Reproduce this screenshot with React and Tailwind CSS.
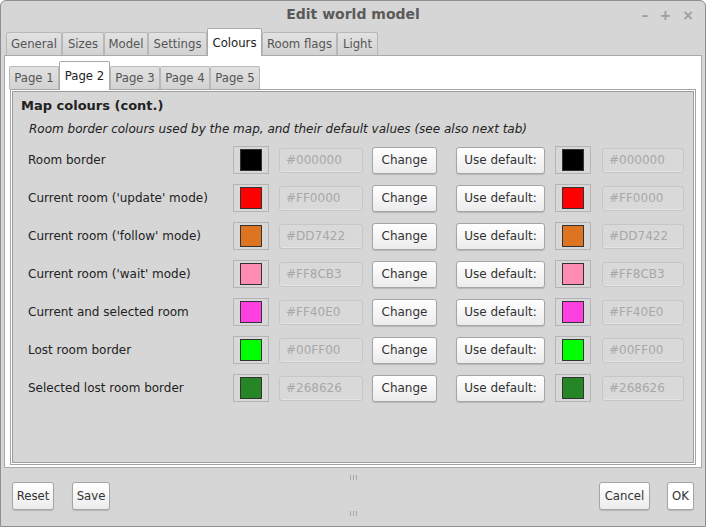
import React from 'react';

const mainTabs = [
  { label: 'General', w: 'w-[56px]' },
  { label: 'Sizes', w: 'w-[42px]' },
  { label: 'Model', w: 'w-[44px]' },
  { label: 'Settings', w: 'w-[59px]' },
  { label: 'Colours', w: 'w-[55px]', active: true },
  { label: 'Room flags', w: 'w-[75px]' },
  { label: 'Light', w: 'w-[41px]' },
];

const pageTabs = [
  { label: 'Page 1', w: 'w-[50px]' },
  { label: 'Page 2', w: 'w-[51px]', active: true },
  { label: 'Page 3', w: 'w-[50px]' },
  { label: 'Page 4', w: 'w-[50px]' },
  { label: 'Page 5', w: 'w-[50px]' },
];

const rows = [
  { label: 'Room border', hex: '#000000', bg: 'bg-[#000000]' },
  { label: "Current room ('update' mode)", hex: '#FF0000', bg: 'bg-[#ff0000]' },
  { label: "Current room ('follow' mode)", hex: '#DD7422', bg: 'bg-[#dd7422]' },
  { label: "Current room ('wait' mode)", hex: '#FF8CB3', bg: 'bg-[#ff8cb3]' },
  { label: 'Current and selected room', hex: '#FF40E0', bg: 'bg-[#ff40e0]' },
  { label: 'Lost room border', hex: '#00FF00', bg: 'bg-[#00ff00]' },
  { label: 'Selected lost room border', hex: '#268626', bg: 'bg-[#268626]' },
];

const Tab = ({ label, w, active, tall }) => (
  <div
    className={`${w} flex items-center justify-center border border-b-0 rounded-t-[2px] ${
      active
        ? `bg-white border-[#a9a9a9] text-[#222] ${tall} relative z-10 -mb-px`
        : 'bg-gradient-to-b from-[#e2e2e2] to-[#d2d2d2] border-[#b8b8b8] text-[#555] h-[23px]'
    }`}
  >
    {label}
  </div>
);

const Swatch = ({ bg }) => (
  <div className="w-[36px] h-[28px] border border-[#b4b4b4] bg-[#d8d8d8] flex items-center justify-center">
    <div className={`w-[22px] h-[22px] border border-[#333] ${bg}`} />
  </div>
);

const HexBox = ({ hex, w }) => (
  <div className={`${w} h-[25px] border border-[#c6c6c6] rounded-[3px] bg-[#d9d9d9] shadow-[inset_0_-1px_0_#e4e4e4] flex items-center pl-[6px] text-[#a8a8a8]`}>
    {hex}
  </div>
);

const Button = ({ children, w, h = 'h-[27px]', extra = '' }) => (
  <div className={`${w} ${h} ${extra} flex items-center justify-center rounded-[3px] border border-[#a5a5a5] bg-gradient-to-b from-white to-[#ececec] shadow-[0_1px_1px_rgba(0,0,0,0.15)] text-[#333]`}>
    {children}
  </div>
);

const Grip = () => (
  <div className="flex justify-center gap-[2px]">
    <div className="w-px h-[5px] bg-[#a8a8a8]" />
    <div className="w-px h-[5px] bg-[#a8a8a8]" />
    <div className="w-px h-[5px] bg-[#a8a8a8]" />
  </div>
);

export default function App() {
  return (
    <div
      className="w-[706px] h-[527px] bg-[#d6d6d6] border border-[#8e8e8e] rounded-t-[6px] flex flex-col overflow-hidden text-[12px]"
      style={{ fontFamily: '"DejaVu Sans", sans-serif' }}
    >
      {/* Title bar */}
      <div className="relative h-[26px] flex items-center justify-center shrink-0">
        <span className="font-bold text-[14px] text-[#5a5a5a]">Edit world model</span>
        <div className="absolute right-[11px] top-[4px] flex gap-[11px] text-[#a0a0a0] text-[14px] font-bold">
          <span>–</span>
          <span>+</span>
          <span>×</span>
        </div>
      </div>

      {/* Main tabs */}
      <div
        className="flex items-end pl-[5px] h-[28px] shrink-0 text-[13px]"
        style={{ fontFamily: '"DejaVu Sans Condensed", "DejaVu Sans", sans-serif' }}
      >
        {mainTabs.map((t) => (
          <Tab key={t.label} {...t} tall="h-[28px]" />
        ))}
      </div>

      {/* Outer pane */}
      <div className="mx-[3px] h-[413px] bg-white border border-[#a9a9a9] flex flex-col shrink-0">
        <div
          className="flex items-end pl-[4px] h-[33px] shrink-0 text-[13px]"
          style={{ fontFamily: '"DejaVu Sans Condensed", "DejaVu Sans", sans-serif' }}
        >
          {pageTabs.map((t) => (
            <Tab key={t.label} {...t} tall="h-[29px]" />
          ))}
        </div>
        <div className="mx-[5px] mb-[2px] flex-1 border border-[#a5a5a5] bg-white p-px flex">
          <div className="flex-1 border border-[#9c9c9c] bg-[#d6d6d6] pt-[3px] pl-[8px]">
            <div className="font-bold text-[13px] text-[#222] h-[22px] flex items-center">Map colours (cont.)</div>
            <div className="italic text-[#222] pl-[8px] h-[24px] flex items-center">
              Room border colours used by the map, and their default values (see also next tab)
            </div>
            <div className="flex flex-col pl-[7px]">
              {rows.map((r) => (
                <div key={r.label} className="flex items-center h-[38px] text-[#222]">
                  <div className="w-[205px]">{r.label}</div>
                  <Swatch bg={r.bg} />
                  <div className="w-[10px]" />
                  <HexBox hex={r.hex} w="w-[84px]" />
                  <div className="w-[9px]" />
                  <Button w="w-[65px]">Change</Button>
                  <div className="w-[19px]" />
                  <Button w="w-[89px]">Use default:</Button>
                  <div className="w-[10px]" />
                  <Swatch bg={r.bg} />
                  <div className="w-[11px]" />
                  <HexBox hex={r.hex} w="w-[82px]" />
                </div>
              ))}
            </div>
          </div>
        </div>
      </div>

      {/* Bottom area */}
      <div
        className="flex-1 flex flex-col text-[13px]"
        style={{ fontFamily: '"DejaVu Sans Condensed", "DejaVu Sans", sans-serif' }}
      >
        <div className="pt-[7px]"><Grip /></div>
        <div className="flex items-center px-[11px] pt-[2px] h-[30px]">
          <Button w="w-[42px]" h="h-[28px]">Reset</Button>
          <div className="w-[18px]" />
          <Button w="w-[38px]" h="h-[28px]">Save</Button>
          <div className="flex-1" />
          <Button w="w-[51px]" h="h-[28px]">Cancel</Button>
          <div className="w-[17px]" />
          <Button w="w-[27px]" h="h-[28px]" extra="!from-white !to-white">OK</Button>
        </div>
        <div className="pt-[1px]"><Grip /></div>
      </div>
    </div>
  );
}
